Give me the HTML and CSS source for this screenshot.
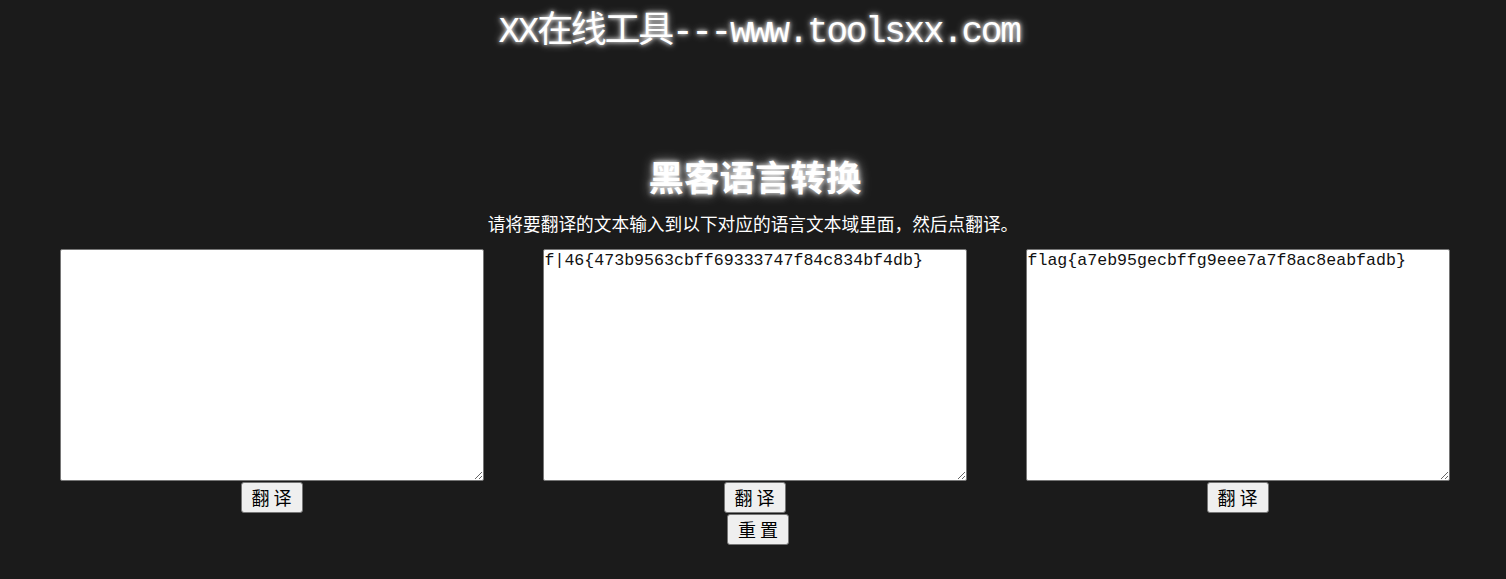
FILE: index.html
```html
<!DOCTYPE html>
<html lang="zh-CN">
<head>
<meta charset="utf-8">
<title>黑客语言转换</title>
<link rel="stylesheet" href="styles.css">
</head>
<body>
<h1 class="site-title">XX在线工具---www.toolsxx.com</h1>
<h2 class="tool-title">黑客语言转换</h2>
<p class="tip">请将要翻译的文本输入到以下对应的语言文本域里面，然后点翻译。</p>
<div class="columns">
  <div class="col">
    <textarea class="box"></textarea>
    <button class="btn">翻 译</button>
  </div>
  <div class="col">
    <textarea class="box">f|46{473b9563cbff69333747f84c834bf4db}</textarea>
    <button class="btn">翻 译</button>
  </div>
  <div class="col">
    <textarea class="box">flag{a7eb95gecbffg9eee7a7f8ac8eabfadb}</textarea>
    <button class="btn">翻 译</button>
  </div>
</div>
<div class="reset-row">
  <button class="btn btn-reset">重 置</button>
</div>
</body>
</html>
```
FILE: styles.css
```css
html, body {
  margin: 0;
  padding: 0;
  background: #1b1b1b;
  color: #fff;
}
body {
  font-family: "Noto Sans CJK SC", "Noto Sans", sans-serif;
  width: 1506px;
  height: 579px;
  overflow: hidden;
}
.site-title {
  margin: 0;
  padding: 14px 0 0 12px;
  height: 38px;
  line-height: 38px;
  text-align: center;
  font-family: "Liberation Mono", "Noto Sans CJK SC", monospace;
  font-weight: normal;
  font-size: 36px;
  letter-spacing: -2.3px;
  color: #fff;
  text-shadow: 0 0 4px #fff, 0 0 9px rgba(255,255,255,0.6);
}
.tool-title {
  margin: 102px 0 0;
  padding-left: 4px;
  height: 44px;
  line-height: 44px;
  text-align: center;
  font-size: 35.5px;
  font-weight: 700;
  color: #fff;
  text-shadow: 0 0 5px #fff, 0 0 12px rgba(255,255,255,0.7);
}
.tip {
  margin: 13px 0 0;
  height: 24px;
  line-height: 24px;
  text-align: center;
  font-size: 17.7px;
  color: #fff;
}
.columns {
  display: flex;
  margin: 14px 0 0 30px;
}
.col {
  width: 483px;
  display: flex;
  flex-direction: column;
  align-items: center;
}
.box {
  box-sizing: border-box;
  width: 424px;
  height: 232px;
  margin: 0;
  padding: 1px 0 0 1px;
  border: 1px solid #767676;
  border-radius: 2px;
  background: #fff;
  color: #111;
  font-family: "Liberation Mono", monospace;
  font-size: 16.6px;
  line-height: 20px;
  resize: both;
  outline: none;
}
.btn {
  box-sizing: border-box;
  width: 62px;
  height: 31px;
  margin-top: 1px;
  padding: 0;
  border: 1px solid #767676;
  border-radius: 3px;
  background: #efefef;
  color: #000;
  font-family: "Noto Sans CJK SC", sans-serif;
  font-size: 18px;
  line-height: 29px;
}
.reset-row {
  display: flex;
  justify-content: center;
  padding-left: 10px;
}
.btn-reset {
  margin-top: 1px;
}
```
